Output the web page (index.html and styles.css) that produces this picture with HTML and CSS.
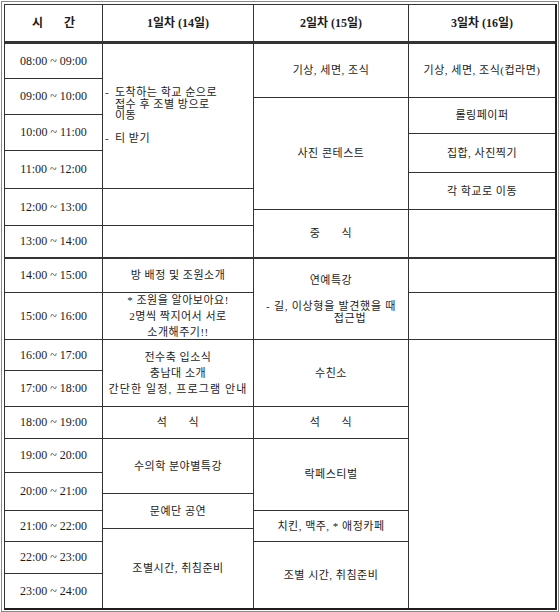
FILE: index.html
```html
<!DOCTYPE html>
<html lang="ko">
<head>
<meta charset="utf-8">
<title>일정표</title>
<link rel="stylesheet" href="styles.css">
</head>
<body>
<div class="frame">
  <div class="sched">
    <div class="cell head c0"><span class="gap">시 간</span></div>
    <div class="cell head c1">1일차 (14일)</div>
    <div class="cell head c2">2일차 (15일)</div>
    <div class="cell head c3">3일차 (16일)</div>

    <div class="cell time c0">08:00 ~ 09:00</div>
    <div class="cell c1 s7 col left">
      <p class="hang"><span class="dash">-</span>도착하는 학교 순으로<br>접수 후 조별 방으로<br>이동</p>
      <p class="hang gapp"><span class="dash">-</span>티 받기</p>
    </div>
    <div class="cell c2 s2">기상, 세면, 조식</div>
    <div class="cell c3 s2">기상, 세면, 조식(컵라면)</div>

    <div class="cell time c0 s2">09:00 ~ 10:00</div>
    <div class="cell c2 s6">사진 콘테스트</div>
    <div class="cell c3 s2">롤링페이퍼</div>

    <div class="cell time c0 s2">10:00 ~ 11:00</div>
    <div class="cell c3 s2">집합, 사진찍기</div>

    <div class="cell time c0 s2">11:00 ~ 12:00</div>
    <div class="cell c3 s2">각 학교로 이동</div>

    <div class="cell time c0 s2">12:00 ~ 13:00</div>
    <div class="cell c1 s2"></div>
    <div class="cell c2 s2 thick"><span class="gap">중 식</span></div>
    <div class="cell c3 s2 thick"></div>

    <div class="cell time c0 thick">13:00 ~ 14:00</div>
    <div class="cell c1 thick"></div>

    <div class="cell time c0">14:00 ~ 15:00</div>
    <div class="cell c1">방 배정 및 조원소개</div>
    <div class="cell c2 s2 col">
      <p>연예특강</p>
      <p class="sub"><span class="dash2">-</span>길, 이상형을 발견했을 때<br><span class="shift">접근법</span></p>
    </div>
    <div class="cell c3"></div>

    <div class="cell time c0">15:00 ~ 16:00</div>
    <div class="cell c1 col lh16">
      <p>* 조원을 알아보아요!</p>
      <p>2명씩 짝지어서 서로</p>
      <p>소개해주기!!</p>
    </div>
    <div class="cell c3"></div>

    <div class="cell time c0">16:00 ~ 17:00</div>
    <div class="cell c1 s2 col lh16">
      <p>전수축 입소식</p>
      <p>충남대 소개</p>
      <p class="wide">간단한 일정, 프로그램 안내</p>
    </div>
    <div class="cell c2 s2">수친소</div>
    <div class="cell c3 s10 end"></div>

    <div class="cell time c0">17:00 ~ 18:00</div>

    <div class="cell time c0">18:00 ~ 19:00</div>
    <div class="cell c1"><span class="gap">석 식</span></div>
    <div class="cell c2"><span class="gap">석 식</span></div>

    <div class="cell time c0">19:00 ~ 20:00</div>
    <div class="cell c1 s2">수의학 분야별특강</div>
    <div class="cell c2 s3">락페스티벌</div>

    <div class="cell time c0 s2">20:00 ~ 21:00</div>

    <div class="cell c1 s2">문예단 공연</div>

    <div class="cell time c0 s2">21:00 ~ 22:00</div>
    <div class="cell c2 s2">치킨, 맥주, * 애정카페</div>

    <div class="cell c1 s3 end">조별시간, 취침준비</div>

    <div class="cell time c0">22:00 ~ 23:00</div>
    <div class="cell c2 s2 end">조별 시간, 취침준비</div>

    <div class="cell time c0 end">23:00 ~ 24:00</div>
  </div>
</div>
</body>
</html>
```
FILE: styles.css
```css
html, body {
  margin: 0;
  padding: 0;
  background: #ffffff;
  overflow: hidden;
}

.frame {
  margin: 1px 1px 0 1px;
  border: 1px solid #8a8a8a;
  padding: 2px 1px 1px 2px;
}

.sched {
  display: grid;
  grid-template-columns: 98px 151px 155px 1fr;
  grid-template-rows: 39px 35px 19px 17px 19px 17px 22px 16px 21px 16px 33px 34px 47px 31px 36px 32px 34px 21px 17px 18px 13px 32px 34px;
  border-top: 1px solid #333333;
  border-left: 1px solid #333333;
  border-right: 2px solid #1e1e1e;
  border-bottom: 2px solid #1e1e1e;
  font-family: "Liberation Serif", "Noto Sans CJK KR", serif;
  font-size: 11px;
  letter-spacing: 0.5px;
  color: #1c1c1c;
}

.cell {
  box-sizing: border-box;
  border-right: 1px solid #333333;
  border-bottom: 1px solid #333333;
  display: flex;
  align-items: center;
  justify-content: center;
  text-align: center;
  line-height: 13px;
  white-space: nowrap;
  overflow: hidden;
}

.c0 { grid-column: 1; }
.c1 { grid-column: 2; }
.c2 { grid-column: 3; }
.c3 { grid-column: 4; border-right: none; }

.s2 { grid-row: span 2; }
.s3 { grid-row: span 3; }
.s6 { grid-row: span 6; }
.s7 { grid-row: span 7; }
.s10 { grid-row: span 10; }

.thick { border-bottom-width: 2px; }
.end { border-bottom: none; }

.head {
  font-size: 12px;
  font-weight: bold;
  letter-spacing: 0;
  border-bottom: 3px solid #333333;
}

.time {
  font-size: 12px;
  letter-spacing: 0;
}

.gap { word-spacing: 18px; }

.col {
  flex-direction: column;
}

.col p {
  margin: 0;
}

.left {
  align-items: stretch;
  text-align: left;
}

.left p {
  line-height: 11.5px;
}

.hang {
  padding-left: 12px;
  text-indent: -10px;
}

.dash {
  display: inline-block;
  width: 10px;
  text-indent: 0;
}

.col .gapp { margin-top: 11.5px; }

.col .sub {
  margin-top: 13px;
  line-height: 12px;
  letter-spacing: 0.7px;
}

.dash2 {
  display: inline-block;
  width: 8px;
  text-align: left;
}

.shift {
  display: inline-block;
  padding-left: 38px;
}

.lh16 p { line-height: 16px; }

.wide { letter-spacing: 1.1px; }
```
